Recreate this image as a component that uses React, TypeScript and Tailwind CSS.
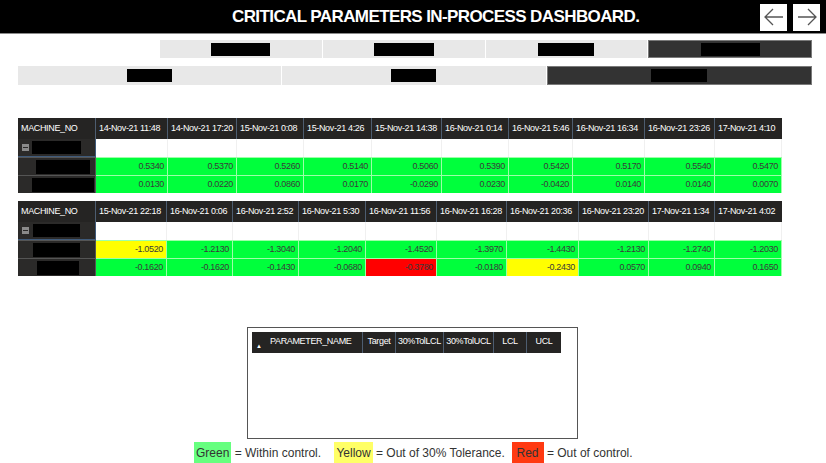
const font = { fontFamily: '"Liberation Sans", Arial, sans-serif' };

type Cell = { v: string; c?: "g" | "y" | "r" };

const t1Cols = "grid-cols-[78px_72px_69px_67px_68px_70px_67px_64px_72px_70px_67px]";
const t2Cols = "grid-cols-[78px_71px_66px_66px_67px_71px_70px_72px_70px_66px_67px]";

const t1Head = [
  "14-Nov-21 11:48", "14-Nov-21 17:20", "15-Nov-21 0:08", "15-Nov-21 4:26", "15-Nov-21 14:38",
  "16-Nov-21 0:14", "16-Nov-21 5:46", "16-Nov-21 16:34", "16-Nov-21 23:26", "17-Nov-21 4:10",
];
const t1Rows: Cell[][] = [
  ["0.5340", "0.5370", "0.5260", "0.5140", "0.5060", "0.5390", "0.5420", "0.5170", "0.5540", "0.5470"].map((v) => ({ v })),
  ["0.0130", "0.0220", "0.0860", "0.0170", "-0.0290", "0.0230", "-0.0420", "0.0140", "0.0140", "0.0070"].map((v) => ({ v })),
];

const t2Head = [
  "15-Nov-21 22:18", "16-Nov-21 0:06", "16-Nov-21 2:52", "16-Nov-21 5:30", "16-Nov-21 11:56",
  "16-Nov-21 16:28", "16-Nov-21 20:36", "16-Nov-21 23:20", "17-Nov-21 1:34", "17-Nov-21 4:02",
];
const t2Rows: Cell[][] = [
  [
    { v: "-1.0520", c: "y" }, { v: "-1.2130" }, { v: "-1.3040" }, { v: "-1.2040" }, { v: "-1.4520" },
    { v: "-1.3970" }, { v: "-1.4430" }, { v: "-1.2130" }, { v: "-1.2740" }, { v: "-1.2030" },
  ],
  [
    { v: "-0.1620" }, { v: "-0.1620" }, { v: "-0.1430" }, { v: "-0.0680" }, { v: "-0.3780", c: "r" },
    { v: "-0.0180" }, { v: "-0.2430", c: "y" }, { v: "0.0570" }, { v: "0.0940" }, { v: "0.1650" },
  ],
];

// black masks in the first column: [padLeft, width]
interface Mask {
  pl: string;
  w: string;
}

const cellBg = (c?: string) =>
  c === "y" ? "bg-[#ffff00]" : c === "r" ? "bg-[#ff0000]" : "bg-[#00ff3c]";

function Pivot({
  cols,
  head,
  rows,
  group,
  masks,
}: {
  cols: string;
  head: string[];
  rows: Cell[][];
  group: Mask;
  masks: Mask[];
}) {
  return (
    <div className={`grid ${cols} w-[764px] ml-[18px] text-[9px] tracking-[-0.35px]`} style={font}>
      {/* header */}
      <div className="h-[21px] bg-[#252423] text-white flex items-center pl-[3px] border-r border-[#4d5d70]">
        MACHINE_NO
      </div>
      {head.map((h, i) => (
        <div
          key={h}
          className={`h-[21px] bg-[#252423] text-white flex items-center pl-[3px] whitespace-nowrap overflow-hidden ${
            i < head.length - 1 ? "border-r border-[#4d5d70]" : ""
          }`}
        >
          {h}
        </div>
      ))}

      {/* group row */}
      <div className="h-[18px] bg-[#2b2a29] flex items-center border-r border-b border-[#3f5a7a]">
        <div className="ml-[4px] w-[7px] h-[7px] bg-[#8a8a8a] flex items-center justify-center">
          <div className="w-[5px] h-[1px] bg-[#2b2a29]" />
        </div>
        <div className={`${group.pl} ${group.w} h-[13px]`}>
          <div className="w-full h-full bg-black" />
        </div>
      </div>
      {head.map((h) => (
        <div key={"g" + h} className="h-[18px] bg-white border-r border-[#f0f0f0]" />
      ))}

      {/* value rows */}
      {rows.map((r, ri) => (
        <div key={ri} className="contents">
          <div className="h-[18px] bg-[#2b2a29] flex items-center border-r border-t border-[#555]">
            <div className={`${masks[ri].pl} w-full`}>
              <div className={`${masks[ri].w} h-[14px] bg-black`} />
            </div>
          </div>
          {r.map((cell, ci) => (
            <div
              key={ci}
              className={`h-[18px] ${cellBg(cell.c)} text-[#3a3a3a] flex items-center justify-end pr-[3px] border-t border-r border-[#9dffa8]`}
            >
              {cell.v}
            </div>
          ))}
        </div>
      ))}
    </div>
  );
}

function Arrow({ dir }: { dir: "l" | "r" }) {
  return (
    <div className="w-[27px] h-[27px] bg-white flex items-center justify-center">
      <svg width="22" height="22" viewBox="0 0 22 22" fill="none" stroke="#555" strokeWidth="1.3">
        {dir === "l" ? (
          <path d="M20 11H2M10 3L2 11l8 8" />
        ) : (
          <path d="M2 11h18M12 3l8 8-8 8" />
        )}
      </svg>
    </div>
  );
}

function Tab({ dark, box, last }: { dark?: boolean; box: string; last?: boolean }) {
  return (
    <div
      className={`flex-1 flex items-center justify-center ${
        dark ? "bg-[#333333] border border-[#7a7a7a]" : "bg-[#e8e8e8]"
      } ${!dark && !last ? "border-r border-white" : ""}`}
    >
      <div className={`${box} h-[13px] bg-black`} />
    </div>
  );
}

export default function App() {
  return (
    <div className="w-[826px] h-[463px] bg-white overflow-hidden flex flex-col" style={font}>
      <div className="h-[34px] bg-black border-b border-[#8a8a8a] flex items-center shrink-0">
        <div className="pl-[232px] text-white font-bold text-[17px] tracking-[-0.6px] whitespace-nowrap">
          CRITICAL PARAMETERS IN-PROCESS DASHBOARD.
        </div>
        <div className="ml-auto mr-[6px] flex gap-[6px] mt-[1px]">
          <Arrow dir="l" />
          <Arrow dir="r" />
        </div>
      </div>

      <div className="mt-[6px] ml-[160px] w-[652px] h-[18px] flex shrink-0">
        <Tab box="w-[59px]" />
        <Tab box="w-[60px]" />
        <Tab box="w-[56px]" />
        <Tab dark box="w-[59px]" />
      </div>

      <div className="mt-[8px] ml-[18px] w-[794px] h-[19px] flex shrink-0">
        <Tab box="w-[45px]" />
        <Tab box="w-[45px]" />
        <Tab dark box="w-[56px]" />
      </div>

      <div className="mt-[33px]">
        <Pivot
          cols={t1Cols}
          head={t1Head}
          rows={t1Rows}
          group={{ pl: "pl-[3px]", w: "w-[52px]" }}
          masks={[
            { pl: "pl-[18px]", w: "w-[54px]" },
            { pl: "pl-[14px]", w: "w-[62px]" },
          ]}
        />
      </div>

      <div className="mt-[8px]">
        <Pivot
          cols={t2Cols}
          head={t2Head}
          rows={t2Rows}
          group={{ pl: "pl-[4px]", w: "w-[51px]" }}
          masks={[
            { pl: "pl-[15px]", w: "w-[47px]" },
            { pl: "pl-[19px]", w: "w-[42px]" },
          ]}
        />
      </div>

      <div className="mt-[51px] ml-[247px] w-[331px] h-[112px] border border-[#555] p-[4px] shrink-0">
        <div className="flex h-[21px] text-[9px] tracking-[-0.35px] text-white bg-[#252423] w-fit">
          <div className="w-[111px] relative border-r border-[#4d5d70] pt-[3px] pl-[18px]">
            PARAMETER_NAME
            <span className="absolute left-[4px] bottom-[2px] text-[6px]">▲</span>
          </div>
          <div className="w-[33px] border-r border-[#4d5d70] pt-[3px] text-center">Target</div>
          <div className="w-[48px] border-r border-[#4d5d70] pt-[3px] text-center">30%TolLCL</div>
          <div className="w-[50px] border-r border-[#4d5d70] pt-[3px] text-center">30%TolUCL</div>
          <div className="w-[33px] border-r border-[#4d5d70] pt-[3px] text-center">LCL</div>
          <div className="w-[34px] pt-[3px] text-center">UCL</div>
        </div>
      </div>

      <div className="mt-[3px] ml-[194px] h-[22px] flex items-stretch text-[12px] text-[#333] whitespace-pre shrink-0">
        <span className="bg-[#66ff7f] px-[2px] flex items-center">Green</span>
        <span className="flex items-center"> = Within control.    </span>
        <span className="bg-[#ffff66] px-[2px] flex items-center">Yellow</span>
        <span className="flex items-center"> = Out of 30% Tolerance.  </span>
        <span className="bg-[#ff3a12] px-[5px] flex items-center">Red</span>
        <span className="flex items-center"> = Out of control.</span>
      </div>
    </div>
  );
}
